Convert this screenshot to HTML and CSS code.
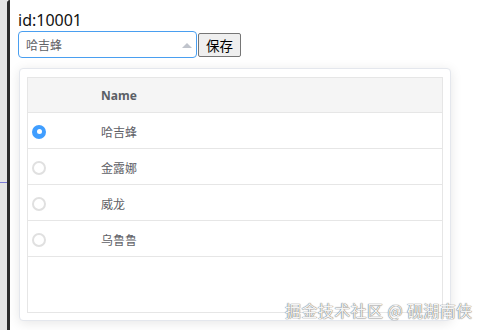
FILE: index.html
```html
<!DOCTYPE html>
<html lang="zh">
<head>
<meta charset="utf-8">
<title>id:10001</title>
<link rel="stylesheet" href="styles.css">
</head>
<body>
  <div class="side"></div>
  <div class="frame"></div>
  <main class="main">
    <div class="title">id:10001</div>
    <div class="form-row">
      <div class="select">
        <span class="select-value">哈吉蜂</span>
        <span class="select-arrow"></span>
      </div>
      <button class="btn" type="button">保存</button>
    </div>
    <div class="panel">
      <div class="table">
        <div class="thead">
          <div class="cell-radio"></div>
          <div class="cell-name">Name</div>
        </div>
        <div class="trow">
          <div class="cell-radio"><span class="radio checked"></span></div>
          <div class="cell-name">哈吉蜂</div>
        </div>
        <div class="trow">
          <div class="cell-radio"><span class="radio"></span></div>
          <div class="cell-name">金露娜</div>
        </div>
        <div class="trow">
          <div class="cell-radio"><span class="radio"></span></div>
          <div class="cell-name">威龙</div>
        </div>
        <div class="trow">
          <div class="cell-radio"><span class="radio"></span></div>
          <div class="cell-name">乌鲁鲁</div>
        </div>
        <div class="tfill"></div>
      </div>
    </div>
    <div class="watermark">掘金技术社区 @ 砚湖南侠</div>
  </main>
</body>
</html>
```
FILE: styles.css
```css
* { box-sizing: border-box; }
html, body { margin: 0; padding: 0; }
body {
  display: flex;
  width: 483px;
  height: 330px;
  overflow: hidden;
  background: #ffffff;
  font-family: "Noto Sans", "Noto Sans CJK SC", sans-serif;
}
.side {
  width: 7px;
  flex: none;
  background: linear-gradient(to bottom, #e4e4e4 0, #e4e4e4 182px, #7b7bd6 182px, #7b7bd6 183px, #e4e4e4 183px);
}
.frame {
  width: 3px;
  flex: none;
  background: #2b2b2b;
  border-top-left-radius: 4px;
}
.main {
  position: relative;
  flex: 1;
  padding: 10px 0 0 8px;
  background: #ffffff;
}
.title {
  font-size: 16px;
  line-height: 20px;
  color: #111;
}
.form-row {
  display: flex;
  align-items: flex-end;
  gap: 1px;
  margin-top: 1px;
}
.select {
  position: relative;
  display: flex;
  align-items: center;
  width: 179px;
  height: 27px;
  padding: 0 0 0 7px;
  border: 1px solid #4a9ff0;
  border-radius: 4px;
  background: #fff;
}
.select-value {
  font-family: "Noto Sans CJK SC", sans-serif;
  font-size: 12px;
  color: #606266;
}
.select-arrow {
  margin-left: auto;
  margin-right: 4px;
  margin-top: 2px;
  width: 0;
  height: 0;
  border-left: 5px solid transparent;
  border-right: 5px solid transparent;
  border-bottom: 5px solid #c0c4cc;
}
.btn {
  width: 43px;
  height: 24px;
  margin-bottom: 1px;
  padding: 0;
  border: 1px solid #767676;
  border-radius: 2px;
  background: #efefef;
  font-family: "Noto Sans CJK SC", sans-serif;
  font-size: 13.5px;
  line-height: 20px;
  color: #000;
}
.panel {
  width: 432px;
  height: 253px;
  margin: 10px 0 0 1px;
  padding: 8px 7px 7px 7px;
  border: 1px solid #e4e7ed;
  border-radius: 4px;
  background: #fff;
  box-shadow: 0 2px 12px rgba(0, 0, 0, 0.1);
}
.table {
  display: flex;
  flex-direction: column;
  height: 236px;
  border: 1px solid #e6e6e6;
}
.thead, .trow {
  display: flex;
  align-items: center;
  border-bottom: 1px solid #e6e6e6;
}
.thead {
  height: 35px;
  background: #f5f5f5;
}
.trow {
  height: 36px;
  padding-top: 2px;
}
.cell-radio {
  width: 73px;
  padding-left: 4px;
  display: flex;
  align-items: center;
}
.cell-name {
  font-family: "Noto Sans CJK SC", sans-serif;
  font-size: 12px;
  color: #5e6066;
}
.thead .cell-name {
  font-family: "Noto Sans", sans-serif;
  font-weight: 700;
  font-size: 12px;
  color: #5b5f66;
}
.tfill { flex: 1; }
.radio {
  position: relative;
  width: 14px;
  height: 14px;
  border: 2px solid #e0e0e0;
  border-radius: 50%;
  background: #fff;
}
.radio.checked {
  border-color: #409eff;
  background: #409eff;
}
.radio.checked::after {
  content: "";
  position: absolute;
  left: 50%;
  top: 50%;
  width: 5px;
  height: 5px;
  margin: -2.5px 0 0 -2.5px;
  border-radius: 50%;
  background: #fff;
}
.watermark {
  position: absolute;
  left: 275px;
  top: 302px;
  font-family: "Noto Sans CJK SC", sans-serif;
  font-size: 16px;
  line-height: 16px;
  letter-spacing: 0.4px;
  color: #f4f4f4;
  white-space: nowrap;
  text-shadow: 0 0 1px #666, 0 0 1px #777;
}
```
